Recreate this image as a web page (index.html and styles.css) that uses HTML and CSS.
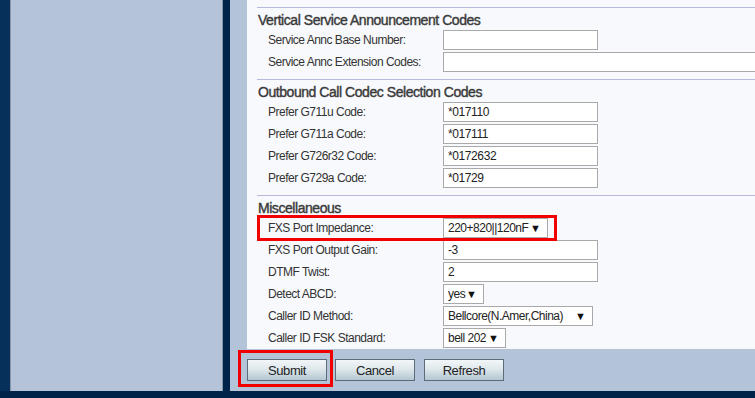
FILE: index.html
```
<!DOCTYPE html>
<html lang="en">
<head>
    <meta charset="UTF-8">
    <title>Voice - Regional</title>
    <link rel="stylesheet" href="styles.css">
</head>
<body>
    <div class="frame">
        <div class="edge"></div>
        <div class="sidebar"></div>
        <div class="split"></div>
        <div class="main">
            <div class="panel">
                <div class="section">
                    <h3>Vertical Service Announcement Codes</h3>
                    <div class="row"><label>Service Annc Base Number:</label><input type="text" value=""></div>
                    <div class="row"><label>Service Annc Extension Codes:</label><input type="text" class="wide" value=""></div>
                </div>
                <div class="section">
                    <h3>Outbound Call Codec Selection Codes</h3>
                    <div class="row"><label>Prefer G711u Code:</label><input type="text" value="*017110"></div>
                    <div class="row"><label>Prefer G711a Code:</label><input type="text" value="*017111"></div>
                    <div class="row"><label>Prefer G726r32 Code:</label><input type="text" value="*0172632"></div>
                    <div class="row"><label>Prefer G729a Code:</label><input type="text" value="*01729"></div>
                </div>
                <div class="section">
                    <h3>Miscellaneous</h3>
                    <div class="row"><label>FXS Port Impedance:</label><span class="select w-imp"><select><option>220+820||120nF</option></select></span></div>
                    <div class="row"><label>FXS Port Output Gain:</label><input type="text" value="-3"></div>
                    <div class="row"><label>DTMF Twist:</label><input type="text" value="2"></div>
                    <div class="row"><label>Detect ABCD:</label><span class="select w-abcd"><select><option>yes</option></select></span></div>
                    <div class="row"><label>Caller ID Method:</label><span class="select w-method"><select><option>Bellcore(N.Amer,China)</option></select></span></div>
                    <div class="row"><label>Caller ID FSK Standard:</label><span class="select w-fsk"><select><option>bell 202</option></select></span></div>
                </div>
                <span class="mark mark-imp"></span>
            </div>
            <div class="actions">
                <button type="submit">Submit</button>
                <button type="button">Cancel</button>
                <button type="button">Refresh</button>
                <span class="mark mark-submit"></span>
            </div>
        </div>
        <div class="bottom"></div>
    </div>
</body>
</html>
```

FILE: styles.css
```
body {
    margin: 0;
    background-color: #00234a;
    font-family: 'Liberation Sans', Arial, sans-serif;
    color: #333;
    overflow: hidden;
}
.frame {
    display: grid;
    grid-template-columns: 10px 213px 7px 1fr;
    grid-template-rows: 391px 7px;
    height: 398px;
    width: 755px;
}
.edge {
    background-color: #06305a;
}
.sidebar {
    background-color: #b4c3d7;
    border-left: 1px solid #8797a8;
    border-right: 1px solid #8797a8;
}
.split {
    background-color: #00234a;
}
.main {
    background-color: #b4c4d8;
    padding-left: 17px;
    position: relative;
    overflow: hidden;
}
.bottom {
    grid-column: 1 / 5;
    background-color: #00234a;
}
.panel {
    background-color: #f8f9fc;
    height: 342px;
    padding: 7px 0 0 10px;
    overflow: hidden;
    position: relative;
}
.section {
    border-top: 1px solid #b6badc;
    padding-bottom: 5px;
}
.section h3 {
    margin: 0;
    height: 22px;
    line-height: 25px;
    font-size: 14px;
    font-weight: normal;
    -webkit-text-stroke: 0.4px #3a3a3a;
    color: #3a3a3a;
    padding-left: 1px;
    letter-spacing: -0.45px;
    white-space: nowrap;
}
.row {
    display: flex;
    align-items: center;
    height: 20px;
    margin-bottom: 2px;
}
.row label {
    flex: none;
    width: 175px;
    padding-left: 11px;
    font-size: 12px;
    letter-spacing: -0.5px;
    color: #333;
    white-space: nowrap;
}
input {
    flex: none;
    box-sizing: border-box;
    width: 155px;
    height: 20px;
    border: 1px solid #a9a9a9;
    background: #fff;
    font-family: 'Liberation Sans', Arial, sans-serif;
    font-size: 12px;
    letter-spacing: -0.4px;
    color: #222;
    padding: 0 4px;
    margin: 0;
}
input.wide {
    width: 400px;
}
.select {
    flex: none;
    position: relative;
    display: inline-block;
    height: 20px;
}
.select select {
    appearance: none;
    -webkit-appearance: none;
    box-sizing: border-box;
    width: 100%;
    height: 20px;
    border: 1px solid #a9a9a9;
    border-radius: 0;
    background: #fff;
    font-family: 'Liberation Sans', Arial, sans-serif;
    font-size: 12px;
    letter-spacing: -0.5px;
    color: #222;
    padding: 0 0 0 4px;
    margin: 0;
}
.select::after {
    content: "\25BC";
    position: absolute;
    right: 7px;
    top: 4px;
    font-size: 11px;
    line-height: 12px;
    color: #111;
    pointer-events: none;
}
.w-imp { width: 105px; }
.w-abcd { width: 41px; }
.w-method { width: 150px; }
.w-fsk { width: 63px; }
.actions {
    display: flex;
    gap: 8px;
    padding-top: 10px;
    position: relative;
}
.actions button {
    box-sizing: border-box;
    width: 80px;
    height: 22px;
    border: 1px solid #5d6c78;
    background: linear-gradient(#f2f6f8, #dfe8ec 45%, #b3c6d0);
    font-family: 'Liberation Sans', Arial, sans-serif;
    font-size: 13px;
    letter-spacing: -0.4px;
    color: #222;
    padding: 0;
}
.actions button + button + button {
    margin-left: 1px;
}
.mark {
    position: absolute;
    border: 3px solid #f20000;
    box-sizing: border-box;
}
.mark-imp {
    left: 10px;
    top: 215px;
    width: 300px;
    height: 26px;
}
.mark-submit {
    left: -9px;
    top: 1px;
    width: 95px;
    height: 37px;
}
```
